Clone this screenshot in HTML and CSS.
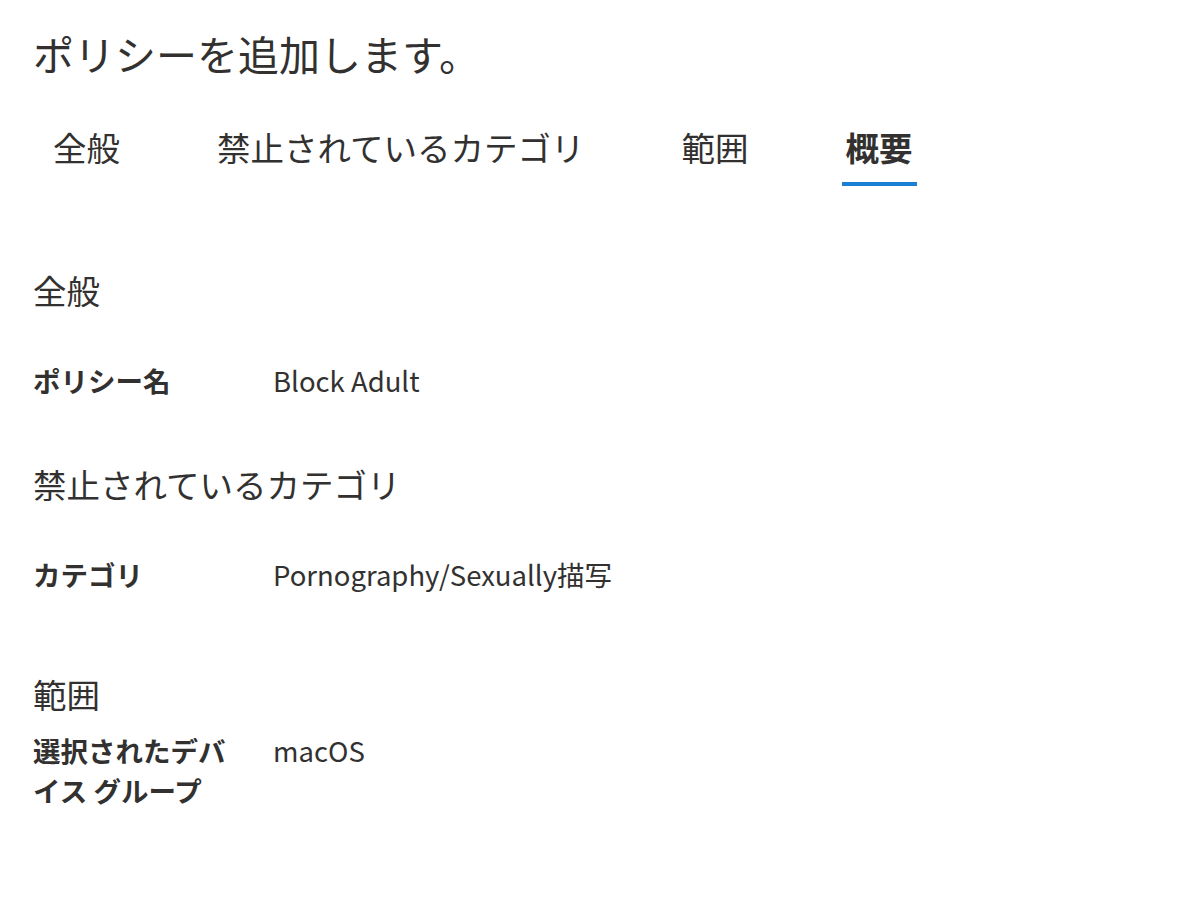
FILE: index.html
```html
<!DOCTYPE html>
<html lang="ja">
<head>
<meta charset="utf-8">
<link rel="stylesheet" href="styles.css">
</head>
<body>
<div class="page">
  <h1 class="title">ポリシーを追加します。</h1>
  <nav class="tabs">
    <span class="tab">全般</span>
    <span class="tab">禁止されているカテゴリ</span>
    <span class="tab">範囲</span>
    <span class="tab active">概要</span>
  </nav>
  <section class="section sec-general">
    <h2 class="heading">全般</h2>
    <div class="row">
      <div class="label">ポリシー名</div>
      <div class="value">Block Adult</div>
    </div>
  </section>
  <section class="section sec-category">
    <h2 class="heading">禁止されているカテゴリ</h2>
    <div class="row">
      <div class="label">カテゴリ</div>
      <div class="value">Pornography/Sexually描写</div>
    </div>
  </section>
  <section class="section sec-scope">
    <h2 class="heading heading-tight">範囲</h2>
    <div class="row">
      <div class="label">選択されたデバイス グループ</div>
      <div class="value">macOS</div>
    </div>
  </section>
</div>
</body>
</html>
```
FILE: styles.css
```css
html, body {
  margin: 0;
  padding: 0;
  background: #ffffff;
}
body {
  font-family: "Noto Sans CJK JP", "Noto Sans", sans-serif;
  color: #323130;
}
.page {
  padding: 28px 0 0 33px;
}
.title {
  margin: 0;
  font-size: 41px;
  font-weight: 400;
  line-height: 50px;
  padding-left: 0;
}
.tabs {
  display: flex;
  gap: 89px;
  margin-top: 47px;
  padding-left: 16px;
}
.tab {
  font-size: 33.5px;
  line-height: 44px;
  padding: 0 4px 13px;
  border-bottom: 4px solid transparent;
}
.tab.active {
  font-weight: 700;
  border-bottom-color: #1a7fd6;
}
.section {
  margin-top: 62px;
}
.sec-general {
  margin-top: 82px;
}
.sec-scope {
  margin-top: 78px;
}
.heading {
  margin: 0 0 48px;
  font-size: 33.5px;
  font-weight: 400;
  line-height: 44px;
}
.heading-tight {
  margin-bottom: 14px;
}
.row {
  display: grid;
  grid-template-columns: 240px 1fr;
  font-size: 27.5px;
  line-height: 40px;
}
.label {
  font-weight: 700;
  padding-right: 30px;
}
.value {
  font-weight: 400;
}
```
